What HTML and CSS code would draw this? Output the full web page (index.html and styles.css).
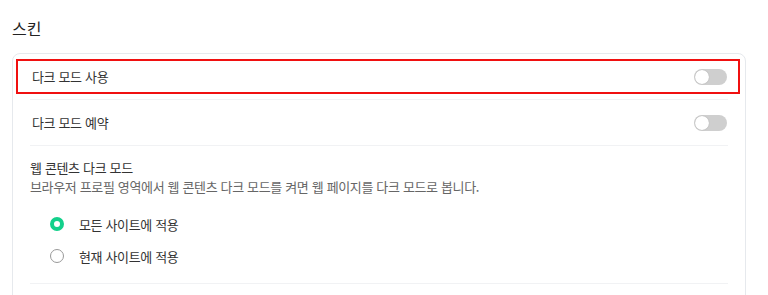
FILE: index.html
```html
<!DOCTYPE html>
<html lang="ko">
<head>
    <meta charset="UTF-8">
    <meta name="viewport" content="width=device-width, initial-scale=1.0">
    <title>스킨</title>
    <link rel="stylesheet" href="styles.css">
</head>
<body>
    <h2 class="section-title">스킨</h2>
    <div class="card">
        <div class="row highlight">
            <span class="label">다크 모드 사용</span>
            <div class="toggle"><span class="knob"></span></div>
        </div>
        <div class="row">
            <span class="label">다크 모드 예약</span>
            <div class="toggle"><span class="knob"></span></div>
        </div>
        <div class="group">
            <div class="group-title">웹 콘텐츠 다크 모드</div>
            <div class="group-desc">브라우저 프로필 영역에서 웹 콘텐츠 다크 모드를 켜면 웹 페이지를 다크 모드로 봅니다.</div>
            <div class="options">
                <label class="option">
                    <span class="radio checked"></span>
                    <span>모든 사이트에 적용</span>
                </label>
                <label class="option">
                    <span class="radio"></span>
                    <span>현재 사이트에 적용</span>
                </label>
            </div>
        </div>
        <div class="row"></div>
    </div>
</body>
</html>
```

FILE: styles.css
```css
body {
    margin: 0;
    padding: 16px 22px 0 12px;
    font-family: 'Noto Sans CJK KR', 'Noto Sans', sans-serif;
    color: #333;
    background-color: #fff;
}
.section-title {
    margin: 0 0 13px;
    font-size: 16px;
    font-weight: normal;
    line-height: 24px;
    color: #222;
}
.card {
    border: 1px solid #e6e9ed;
    border-radius: 8px;
    padding: 0 17px;
    font-size: 13px;
    letter-spacing: -0.35px;
}
.row {
    position: relative;
    display: flex;
    justify-content: space-between;
    align-items: center;
    height: 45px;
    border-bottom: 1px solid #f1f2f4;
}
.highlight::after {
    content: '';
    position: absolute;
    top: 5px;
    bottom: 5px;
    left: -14px;
    right: -12px;
    border: 2px solid #f01010;
}
.label {
    padding-left: 2px;
}
.toggle {
    position: relative;
    width: 33px;
    height: 16px;
    margin-right: 1px;
    border-radius: 8px;
    background-color: #cfcfcf;
}
.knob {
    position: absolute;
    top: 1px;
    left: 1px;
    width: 14px;
    height: 14px;
    border-radius: 50%;
    background-color: #fff;
    box-shadow: 0 0 1px rgba(0, 0, 0, 0.3);
}
.group {
    padding: 12px 0 11px;
    border-bottom: 1px solid #f1f2f4;
}
.group-title {
    line-height: 19px;
}
.group-desc {
    line-height: 19px;
    color: #666;
}
.options {
    padding: 12px 0 0 20px;
}
.option {
    display: flex;
    align-items: center;
    gap: 15px;
    height: 32px;
}
.radio {
    box-sizing: border-box;
    width: 14px;
    height: 14px;
    border: 1px solid #999;
    border-radius: 50%;
}
.radio.checked {
    border: 4px solid #13d08b;
}
```
